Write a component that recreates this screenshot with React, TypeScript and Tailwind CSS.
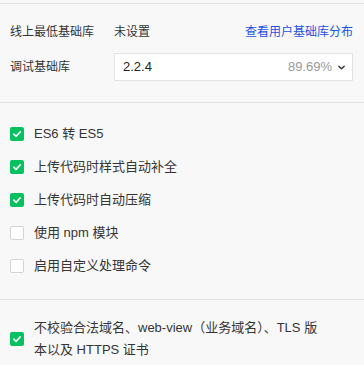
import React, { useState } from 'react';

const font = 'font-["Liberation_Sans","Noto_Sans_CJK_SC",sans-serif]';

interface OptionItem {
  key: string;
  label: string;
  checked: boolean;
}

const OPTIONS: OptionItem[] = [
  { key: 'es6', label: 'ES6 转 ES5', checked: true },
  { key: 'postcss', label: '上传代码时样式自动补全', checked: true },
  { key: 'minify', label: '上传代码时自动压缩', checked: true },
  { key: 'npm', label: '使用 npm 模块', checked: false },
  { key: 'custom', label: '启用自定义处理命令', checked: false },
];

function CheckBox({ checked, onChange }: { checked: boolean; onChange: () => void }) {
  return (
    <button
      type="button"
      onClick={onChange}
      className={`flex h-[14px] w-[14px] shrink-0 items-center justify-center rounded-[2px] ${
        checked ? 'bg-[#07c160]' : 'border border-[#d4d4d4] bg-white'
      }`}
    >
      {checked && (
        <svg width="10" height="10" viewBox="0 0 10 10" fill="none">
          <path d="M1.8 5.2 L4.1 7.4 L8.3 2.8" stroke="white" strokeWidth="1.6" strokeLinecap="round" strokeLinejoin="round" />
        </svg>
      )}
    </button>
  );
}

export default function App() {
  const [opts, setOpts] = useState<Record<string, boolean>>(
    Object.fromEntries(OPTIONS.map((o) => [o.key, o.checked]))
  );
  const [skipCheck, setSkipCheck] = useState(true);

  const toggle = (key: string) => setOpts({ ...opts, [key]: !opts[key] });

  return (
    <div className={`h-[365px] w-[364px] overflow-hidden bg-[#f8f8f8] text-[#353535] ${font}`}>
      <div className="h-[3px]" />

      {/* base library */}
      <div className="border-t border-[#e2e2e2] px-[10px] pb-[21px] pt-[18px]">
        <div className="flex h-[20px] items-center text-[12px]">
          <span className="w-[104px]">线上最低基础库</span>
          <span>未设置</span>
          <a className="ml-auto pr-[1px] text-[#1d52e0]" href="#">
            查看用户基础库分布
          </a>
        </div>
        <div className="mt-[11px] flex items-center">
          <span className="w-[104px] text-[12px]">调试基础库</span>
          <div className="flex h-[28px] w-[239px] items-center border border-[#e3e3e3] bg-white pl-[8px] pr-[6px]">
            <span className="text-[13px] text-[#222]">2.2.4</span>
            <span className="ml-auto text-[13px] text-[#9a9a9a]">89.69%</span>
            <svg className="ml-[5px]" width="9" height="9" viewBox="0 0 10 10" fill="none">
              <path d="M2 3.5 L5 6.5 L8 3.5" stroke="#333" strokeWidth="1.6" strokeLinecap="round" strokeLinejoin="round" />
            </svg>
          </div>
        </div>
      </div>

      {/* compile options */}
      <div className="border-t border-[#e2e2e2] px-[10px] pb-[17px] pt-[14px]">
        {OPTIONS.map((o) => (
          <div key={o.key} className="flex h-[33px] items-center gap-[10px] text-[13px]">
            <CheckBox checked={opts[o.key]} onChange={() => toggle(o.key)} />
            <span>{o.label}</span>
          </div>
        ))}
      </div>

      {/* domain check */}
      <div className="border-t border-[#e2e2e2] px-[10px] pt-[17px]">
        <div className="flex items-center gap-[10px] text-[13px]">
          <CheckBox checked={skipCheck} onChange={() => setSkipCheck(!skipCheck)} />
          <span className="leading-[22px]">
            不校验合法域名、web-view（业务域名）、TLS 版
            <br />
            本以及 HTTPS 证书
          </span>
        </div>
      </div>
    </div>
  );
}
